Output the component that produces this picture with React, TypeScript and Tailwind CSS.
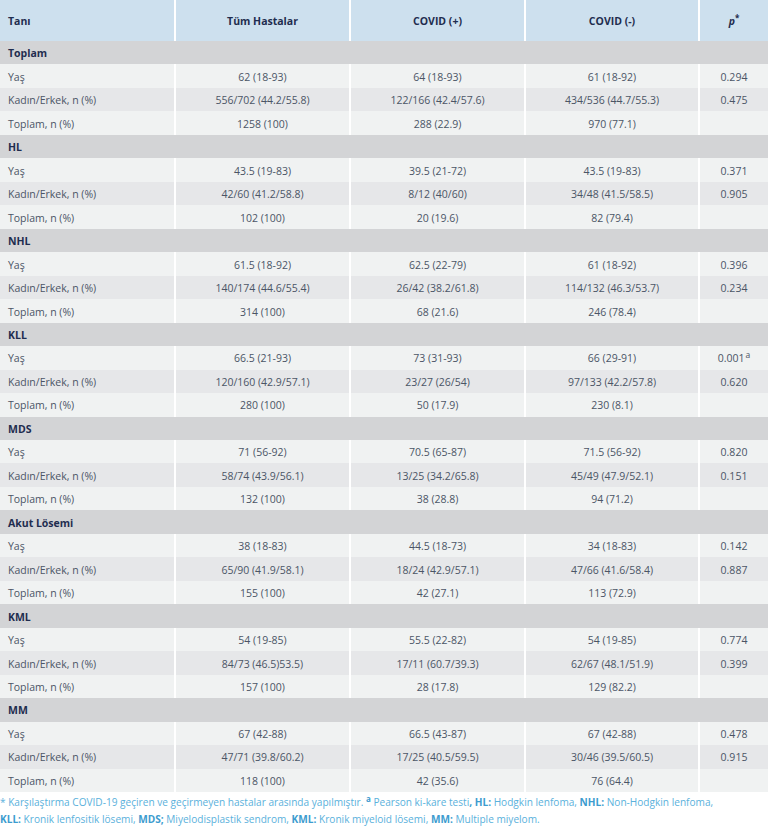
import React from "react";

type Row = [string, string, string, string, React.ReactNode];
type Section = { title: string; rows: Row[] };

const sections: Section[] = [
  {
    title: "Toplam",
    rows: [
      ["Yaş", "62 (18-93)", "64 (18-93)", "61 (18-92)", "0.294"],
      ["Kadın/Erkek, n (%)", "556/702 (44.2/55.8)", "122/166 (42.4/57.6)", "434/536 (44.7/55.3)", "0.475"],
      ["Toplam, n (%)", "1258 (100)", "288 (22.9)", "970 (77.1)", ""],
    ],
  },
  {
    title: "HL",
    rows: [
      ["Yaş", "43.5 (19-83)", "39.5 (21-72)", "43.5 (19-83)", "0.371"],
      ["Kadın/Erkek, n (%)", "42/60 (41.2/58.8)", "8/12 (40/60)", "34/48 (41.5/58.5)", "0.905"],
      ["Toplam, n (%)", "102 (100)", "20 (19.6)", "82 (79.4)", ""],
    ],
  },
  {
    title: "NHL",
    rows: [
      ["Yaş", "61.5 (18-92)", "62.5 (22-79)", "61 (18-92)", "0.396"],
      ["Kadın/Erkek, n (%)", "140/174 (44.6/55.4)", "26/42 (38.2/61.8)", "114/132 (46.3/53.7)", "0.234"],
      ["Toplam, n (%)", "314 (100)", "68 (21.6)", "246 (78.4)", ""],
    ],
  },
  {
    title: "KLL",
    rows: [
      [
        "Yaş",
        "66.5 (21-93)",
        "73 (31-93)",
        "66 (29-91)",
        <span>
          0.001<sup className="text-[8.5px] ml-[1px]">a</sup>
        </span>,
      ],
      ["Kadın/Erkek, n (%)", "120/160 (42.9/57.1)", "23/27 (26/54)", "97/133 (42.2/57.8)", "0.620"],
      ["Toplam, n (%)", "280 (100)", "50 (17.9)", "230 (8.1)", ""],
    ],
  },
  {
    title: "MDS",
    rows: [
      ["Yaş", "71 (56-92)", "70.5 (65-87)", "71.5 (56-92)", "0.820"],
      ["Kadın/Erkek, n (%)", "58/74 (43.9/56.1)", "13/25 (34.2/65.8)", "45/49 (47.9/52.1)", "0.151"],
      ["Toplam, n (%)", "132 (100)", "38 (28.8)", "94 (71.2)", ""],
    ],
  },
  {
    title: "Akut Lösemi",
    rows: [
      ["Yaş", "38 (18-83)", "44.5 (18-73)", "34 (18-83)", "0.142"],
      ["Kadın/Erkek, n (%)", "65/90 (41.9/58.1)", "18/24 (42.9/57.1)", "47/66 (41.6/58.4)", "0.887"],
      ["Toplam, n (%)", "155 (100)", "42 (27.1)", "113 (72.9)", ""],
    ],
  },
  {
    title: "KML",
    rows: [
      ["Yaş", "54 (19-85)", "55.5 (22-82)", "54 (19-85)", "0.774"],
      ["Kadın/Erkek, n (%)", "84/73 (46.5)53.5)", "17/11 (60.7/39.3)", "62/67 (48.1/51.9)", "0.399"],
      ["Toplam, n (%)", "157 (100)", "28 (17.8)", "129 (82.2)", ""],
    ],
  },
  {
    title: "MM",
    rows: [
      ["Yaş", "67 (42-88)", "66.5 (43-87)", "67 (42-88)", "0.478"],
      ["Kadın/Erkek, n (%)", "47/71 (39.8/60.2)", "17/25 (40.5/59.5)", "30/46 (39.5/60.5)", "0.915"],
      ["Toplam, n (%)", "118 (100)", "42 (35.6)", "76 (64.4)", ""],
    ],
  },
];

const grid = "grid grid-cols-[174px_173px_173px_172px_1fr] gap-x-[2px]";

function DataRow({ row, idx }: { row: Row; idx: number }) {
  const bg = idx === 1 ? "bg-[#e6e7e9]" : "bg-[#f0f2f2]";
  return (
    <div className={`${grid} bg-white`}>
      <div className={`${bg} h-[23.47px] flex items-center pl-[8px] pt-[3px]`}>{row[0]}</div>
      <div className={`${bg} h-[23.47px] flex items-center justify-center pt-[3px]`}>{row[1]}</div>
      <div className={`${bg} h-[23.47px] flex items-center justify-center pt-[3px]`}>{row[2]}</div>
      <div className={`${bg} h-[23.47px] flex items-center justify-center pt-[3px]`}>{row[3]}</div>
      <div className={`${bg} h-[23.47px] flex items-center justify-center pt-[3px]`}>{row[4]}</div>
    </div>
  );
}

export default function App() {
  return (
    <div
      className="w-[768px] h-[827px] bg-white text-[10.5px] text-[#4b5566] overflow-hidden"
      style={{ fontFamily: '"Open Sans", "Noto Sans", sans-serif' }}
    >
      <div className={`${grid} bg-white`}>
        <div className="bg-[#cde0ee] h-[41px] flex items-center pl-[8px] pt-[2px] font-bold text-[#1f2d4f]">Tanı</div>
        <div className="bg-[#cde0ee] h-[41px] flex items-center justify-center pt-[2px] font-bold text-[#1f2d4f]">Tüm Hastalar</div>
        <div className="bg-[#cde0ee] h-[41px] flex items-center justify-center pt-[2px] font-bold text-[#1f2d4f]">COVID (+)</div>
        <div className="bg-[#cde0ee] h-[41px] flex items-center justify-center pt-[2px] font-bold text-[#1f2d4f]">COVID (-)</div>
        <div className="bg-[#cde0ee] h-[41px] flex items-center justify-center pt-[2px] font-bold text-[#1f2d4f]">
          <span>
            <span className="italic">p</span>
            <sup className="text-[8px]">*</sup>
          </span>
        </div>
      </div>
      {sections.map((s) => (
        <div key={s.title}>
          <div className="bg-[#d3d4d6] h-[23.47px] flex items-center pl-[8px] pt-[3px] font-bold text-[#1f2d4f]">{s.title}</div>
          {s.rows.map((r, i) => (
            <DataRow key={i} row={r} idx={i} />
          ))}
        </div>
      ))}
      <div className="pt-[2px] text-[10.1px] leading-[17px] text-[#5ab1dc]">
        <div className="whitespace-nowrap">
          * Karşılaştırma COVID-19 geçiren ve geçirmeyen hastalar arasında yapılmıştır.{"  "}
          <sup className="font-bold text-[8px] text-[#3d9ccf]">a</sup> Pearson ki-kare testi
          <b className="text-[#3d9ccf]">, HL:</b> Hodgkin lenfoma, <b className="text-[#3d9ccf]">NHL:</b> Non-Hodgkin lenfoma,
        </div>
        <div className="whitespace-nowrap">
          <b className="text-[#3d9ccf]">KLL:</b> Kronik lenfositik lösemi, <b className="text-[#3d9ccf]">MDS;</b> Miyelodisplastik sendrom,{" "}
          <b className="text-[#3d9ccf]">KML:</b> Kronik miyeloid lösemi, <b className="text-[#3d9ccf]">MM:</b> Multiple miyelom.
        </div>
      </div>
    </div>
  );
}
